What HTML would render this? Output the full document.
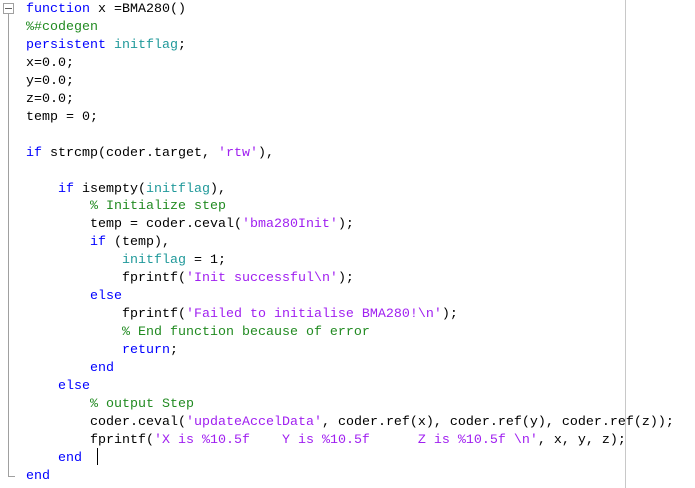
<!DOCTYPE html>
<html><head><style>
body{margin:0;width:695px;height:488px;background:#fff;position:relative;overflow:hidden}
pre{margin:0;position:absolute;left:26px;top:1px;font-family:"Liberation Mono",monospace;font-size:13.33px;line-height:17.96px;color:#000}
.k{color:#0000ff}.c{color:#228b22}.s{color:#a020f0}.v{color:#20999a}
</style></head><body>
<div style="position:absolute;left:625px;top:0;width:1px;height:488px;background:#c8c8c8"></div>
<div style="position:absolute;left:3px;top:3px;width:9px;height:9px;border:1px solid #a0a0a0;background:#fff"></div>
<div style="position:absolute;left:5px;top:8px;width:7px;height:1px;background:#606060"></div>
<div style="position:absolute;left:8px;top:14px;width:1px;height:463px;background:#a0a0a0"></div>
<div style="position:absolute;left:8px;top:476px;width:7px;height:1px;background:#a0a0a0"></div>
<div style="position:absolute;left:97px;top:448px;width:1px;height:17px;background:#000"></div>
<pre><span class="k">function</span> x =BMA280()
<span class="c">%#codegen</span>
<span class="k">persistent</span> <span class="v">initflag</span>;
x=0.0;
y=0.0;
z=0.0;
temp = 0;

<span class="k">if</span> strcmp(coder.target, <span class="s">'rtw'</span>),

    <span class="k">if</span> isempty(<span class="v">initflag</span>),
        <span class="c">% Initialize step</span>
        temp = coder.ceval(<span class="s">'bma280Init'</span>);
        <span class="k">if</span> (temp),
            <span class="v">initflag</span> = 1;
            fprintf(<span class="s">'Init successful\n'</span>);
        <span class="k">else</span>
            fprintf(<span class="s">'Failed to initialise BMA280!\n'</span>);
            <span class="c">% End function because of error</span>
            <span class="k">return</span>;
        <span class="k">end</span>
    <span class="k">else</span>
        <span class="c">% output Step</span>
        coder.ceval(<span class="s">'updateAccelData'</span>, coder.ref(x), coder.ref(y), coder.ref(z));
        fprintf(<span class="s">'X is %10.5f    Y is %10.5f      Z is %10.5f \n'</span>, x, y, z);
    <span class="k">end</span>
<span class="k">end</span></pre>
</body></html>
